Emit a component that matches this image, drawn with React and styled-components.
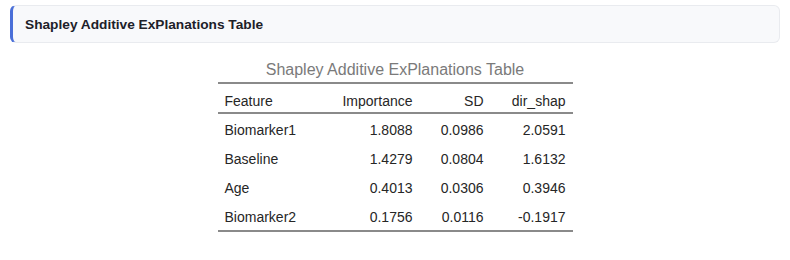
import React from "react";
import styled, { createGlobalStyle } from "styled-components";

const GlobalStyle = createGlobalStyle`
  body {
    margin: 0;
    background: #ffffff;
    font-family: "Liberation Sans", Arial, sans-serif;
  }
`;

const Page = styled.div`
  width: 790px;
  height: 260px;
  padding: 5px 10px 0 10px;
  box-sizing: border-box;
`;

const Header = styled.div`
  height: 38px;
  display: flex;
  align-items: center;
  padding-left: 12px;
  background: #f8f9fb;
  border: 1px solid #e9ebef;
  border-left: 3px solid #4a6fd8;
  border-radius: 6px;
  box-sizing: border-box;
  font-size: 13.7px;
  font-weight: 700;
  color: #1d2129;
`;

const TableWrap = styled.div`
  display: flex;
  justify-content: center;
  margin-top: 18px;
`;

const Table = styled.table`
  width: 355px;
  table-layout: fixed;
  border-collapse: collapse;
  font-size: 14px;
  line-height: 16px;
  color: #262626;
`;

const Caption = styled.caption`
  color: #7a7a7a;
  font-size: 16px;
  line-height: 18px;
  padding-bottom: 3px;
`;

const HeadRow = styled.tr`
  border-top: 2px solid #8a8a8a;
  border-bottom: 2px solid #8a8a8a;
`;

const BodyRow = styled.tr`
  &:last-child {
    border-bottom: 2px solid #8a8a8a;
  }
`;

const Th = styled.th`
  font-weight: 400;
  text-align: ${(p) => (p.$left ? "left" : "right")};
  padding: 9px 7px 3px 7px;
`;

const Td = styled.td`
  text-align: ${(p) => (p.$left ? "left" : "right")};
  padding: 8px 7px 5px 7px;
`;

const widths = [113, 89, 71, 82];

const rows = [
  ["Biomarker1", "1.8088", "0.0986", "2.0591"],
  ["Baseline", "1.4279", "0.0804", "1.6132"],
  ["Age", "0.4013", "0.0306", "0.3946"],
  ["Biomarker2", "0.1756", "0.0116", "-0.1917"],
];

export default function App() {
  return (
    <>
      <GlobalStyle />
      <Page>
        <Header>Shapley Additive ExPlanations Table</Header>
        <TableWrap>
          <Table>
            <Caption>Shapley Additive ExPlanations Table</Caption>
            <colgroup>
              {widths.map((w, i) => (
                <col key={i} style={{ width: w }} />
              ))}
            </colgroup>
            <thead>
              <HeadRow>
                <Th $left>Feature</Th>
                <Th>Importance</Th>
                <Th>SD</Th>
                <Th>dir_shap</Th>
              </HeadRow>
            </thead>
            <tbody>
              {rows.map((r) => (
                <BodyRow key={r[0]}>
                  <Td $left>{r[0]}</Td>
                  <Td>{r[1]}</Td>
                  <Td>{r[2]}</Td>
                  <Td>{r[3]}</Td>
                </BodyRow>
              ))}
            </tbody>
          </Table>
        </TableWrap>
      </Page>
    </>
  );
}
